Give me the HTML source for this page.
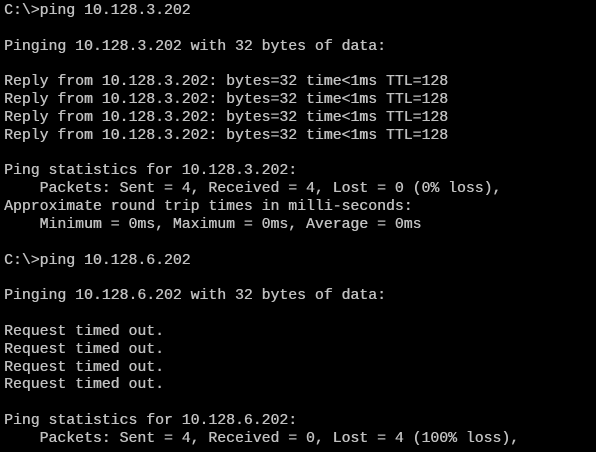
<!DOCTYPE html>
<html><head><style>
html,body{margin:0;padding:0;background:#000;width:596px;height:452px;overflow:hidden}
pre{margin:0;padding:3px 0 0 4px;font-family:"Liberation Mono","Courier New",monospace;font-size:14.8px;line-height:17.83px;color:#c0c0c0;font-weight:normal;text-shadow:0.4px 0 0 #c0c0c0}
</style></head><body><pre>C:\&gt;ping 10.128.3.202

Pinging 10.128.3.202 with 32 bytes of data:

Reply from 10.128.3.202: bytes=32 time&lt;1ms TTL=128
Reply from 10.128.3.202: bytes=32 time&lt;1ms TTL=128
Reply from 10.128.3.202: bytes=32 time&lt;1ms TTL=128
Reply from 10.128.3.202: bytes=32 time&lt;1ms TTL=128

Ping statistics for 10.128.3.202:
    Packets: Sent = 4, Received = 4, Lost = 0 (0% loss),
Approximate round trip times in milli-seconds:
    Minimum = 0ms, Maximum = 0ms, Average = 0ms

C:\&gt;ping 10.128.6.202

Pinging 10.128.6.202 with 32 bytes of data:

Request timed out.
Request timed out.
Request timed out.
Request timed out.

Ping statistics for 10.128.6.202:
    Packets: Sent = 4, Received = 0, Lost = 4 (100% loss),
</pre></body></html>
